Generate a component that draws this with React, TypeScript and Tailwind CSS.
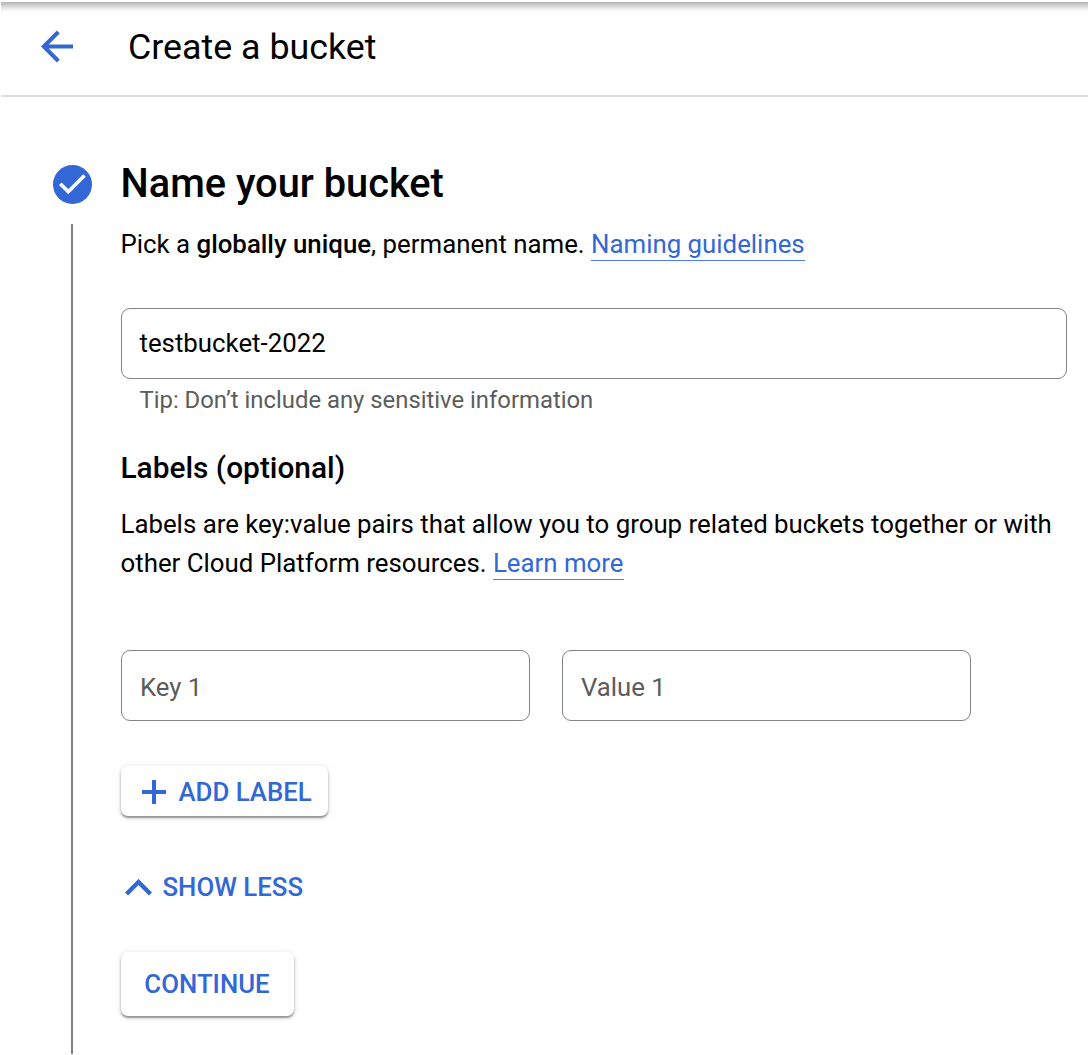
import React from "react";

export default function App() {
  return (
    <div className="flex h-[1055px] w-[1089px] flex-col overflow-hidden bg-white font-['Roboto',sans-serif] text-black">
      <div className="ml-px mt-[2px] h-[11px] w-[1087px] shrink-0 bg-[linear-gradient(to_bottom,#b5b5b5_0,#d0d0d0_30%,#f0f0f0_65%,#ffffff)]" />
      <header className="ml-px flex h-[84px] w-[1087px] shrink-0 items-center border-b-2 border-[#dfdfdf] pb-[15px]">
        <svg className="ml-[40px] mr-[55px] h-[33px] w-[32px]" viewBox="0 0 32 33" fill="none" stroke="#3367d6" strokeWidth="4"><path d="M32 16.5H3M17.3 2 2.8 16.5 17.3 31" /></svg>
        <h1 className="text-[35.8px] leading-[42px]">Create a bucket</h1>
      </header>
      <main className="flex flex-1 pl-[53px]">
        <div className="mb-px flex w-[39px] shrink-0 flex-col items-center pt-[68px]">
          <svg className="size-[39px] shrink-0" viewBox="0 0 39 39"><circle cx="19.5" cy="19.5" r="19.5" fill="#3367d6" /><path d="m7.3 18.7 8 8L31.5 10.5" fill="none" stroke="white" strokeWidth="3.7" /></svg>
          <div className="mr-px mt-5 w-[2px] flex-1 bg-[#808080]" />
        </div>
        <section className="ml-[28.5px] flex w-[946px] flex-col items-start pt-[62px]">
          <h2 className="whitespace-nowrap text-[39.75px] font-medium leading-[50px]">Name your bucket</h2>
          <p className="mt-[15px] whitespace-nowrap text-[25.82px] leading-[40px]">Pick a <span className="font-medium">globally unique</span>, permanent name. <a className="border-b border-[#4a7be6] pb-px text-[#3367d6]">Naming guidelines</a></p>
          <div className="mt-[44px] flex h-[71px] w-full items-center rounded-[9px] border border-[#80868b] px-[18px] pb-px text-[25.8px]">testbucket-2022</div>
          <p className="ml-[19px] mt-[5px] whitespace-nowrap text-[23.85px] leading-[32px] text-[#5c5c5c]">Tip: Don’t include any sensitive information</p>
          <h3 className="mt-[32px] text-[29.85px] font-medium leading-[40px]">Labels (optional)</h3>
          <p className="mt-[17px] whitespace-nowrap text-[25.82px] leading-[39px]">Labels are key:value pairs that allow you to group related buckets together or with<br />other Cloud Platform resources. <a className="border-b border-[#4a7be6] pb-px text-[#3367d6]">Learn more</a></p>
          <div className="mt-[67px] flex gap-8 text-[25.7px] text-[#5c5c5c]">
            <div className="flex h-[71px] w-[409px] items-center rounded-[9px] border border-[#80868b] px-[18.5px] pt-[3px]">Key 1</div>
            <div className="flex h-[71px] w-[409px] items-center rounded-[9px] border border-[#80868b] px-[18.5px] pt-[3px]">Value 1</div>
          </div>
          <button className="mt-[45px] flex h-[50px] w-[207px] items-center whitespace-nowrap rounded-[7px] bg-white pl-[21px] pt-[2px] text-[25.8px] font-medium text-[#3367d6] shadow-[0_2px_2px_rgba(0,0,0,0.38),0_1px_6px_rgba(0,0,0,0.14)]">
            <svg className="mr-[13px] size-[24px] shrink-0" viewBox="0 0 24 24" fill="none" stroke="currentColor" strokeWidth="4"><path d="M12 0v24M0 12h24" /></svg>
            ADD LABEL
          </button>
          <button className="ml-[4px] mt-[51px] flex h-[40px] items-center whitespace-nowrap pt-px text-[25.8px] font-medium text-[#3367d6]">
            <svg className="mr-[11px] h-[17px] w-[27px] shrink-0" viewBox="0 0 27 17" fill="none" stroke="currentColor" strokeWidth="4.4"><path d="m1.5 15 12-12 12 12" /></svg>
            SHOW LESS
          </button>
          <button className="mt-[45px] flex h-[64px] w-[173px] items-center justify-center whitespace-nowrap rounded-[7px] bg-white pt-px text-[25.8px] font-medium text-[#3367d6] shadow-[0_2px_2px_rgba(0,0,0,0.38),0_1px_6px_rgba(0,0,0,0.14)]">CONTINUE</button>
        </section>
      </main>
    </div>
  );
}
